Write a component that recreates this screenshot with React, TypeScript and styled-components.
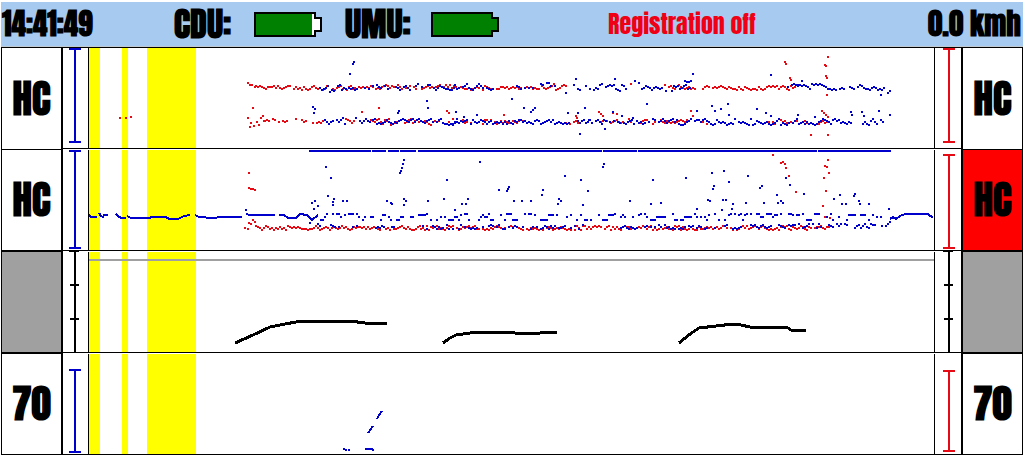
import React from 'react';
import styled, { createGlobalStyle } from 'styled-components';

const BLUE = '#0000cc';
const RED = '#e60a14';
const GREY = '#a0a0a0';

const GlobalStyle = createGlobalStyle`
  * { box-sizing: border-box; }
  body { margin: 0; background: #fff; }
`;

const Screen = styled.main`
  padding: 0 1px;
  color: #000;
  background: #fff;
  font-family: Impact, Anton, 'Roboto Condensed', 'Liberation Sans', sans-serif;
  font-weight: 700;
`;

const StatusBar = styled.header`
  display: flex;
  align-items: center;
  height: 47px;
  padding: 0 2px 0 1px;
  background: #a6caf0;
  border-top: 2px solid #fff;
  border-bottom: 1px solid #c0c8d0;
  white-space: nowrap;
`;

const Clock = styled.time`
  flex: none;
  width: 172px;
  font-size: 29px;
  line-height: 32px;
`;

const Unit = styled.div`
  display: flex;
  align-items: center;
  flex: none;
  width: 171px;
  font-size: 34px;
  line-height: 36px;
`;

const UnitName = styled.span<{ $width: number }>`
  width: ${p => p.$width}px;
`;

const Registration = styled.span`
  margin-left: 92px;
  color: #f00014;
  font-size: 24px;
  font-weight: 400;
  line-height: 28px;
`;

const Speed = styled.span`
  margin-left: auto;
  font-size: 29px;
  line-height: 32px;
`;

const Lanes = styled.div`
  border: 0 solid #000;
  border-width: 0 1px;
`;

const Lane = styled.section`
  display: grid;
  grid-template-columns: 61px 25px minmax(0, 1fr) 26px 61px;
  height: 102px;
  border-bottom: 1px solid #000;
  &:first-child { border-top: 1px solid #000; }
`;

const Channel = styled.div<{ $side: 'left' | 'right'; $fill: string }>`
  display: flex;
  align-items: center;
  justify-content: center;
  background: ${p => p.$fill};
  border: 0 solid #000;
  border-top-width: 1px;
  border-${p => (p.$side === 'left' ? 'right' : 'left')}-width: 2px;
  font-size: 39px;
  line-height: 44px;
  ${Lane}:first-child & { border-top-width: 0; }
`;

const Gauge = styled.svg`
  display: block;
  width: 100%;
  height: 101px;
`;

const Plot = styled.svg`
  display: block;
  width: 100%;
  height: 100px;
  margin-top: 1px;
  border: 0 solid #000;
  border-width: 0 1px;
  ${Lane}:first-child & { margin-top: 0; }
`;

type Pt = [number, number];
/* from, to, centre, spread, share of filled columns */
type Band = [number, number, number, number, number];

const random = (seed: number) => {
  let s = seed;
  return () => {
    s = (s * 1664525 + 1013904223) % 4294967296;
    return s / 4294967296;
  };
};

/* Echo trace that scatters around its centre, broken into short slanted runs */
const drift = (bands: Band[], seed: number): Pt[] => {
  const next = random(seed);
  const out: Pt[] = [];
  bands.forEach(([from, to, centre, spread, fill]) => {
    let y = centre;
    let slope = 1;
    for (let x = from; x < to; x += 2) {
      if (next() < 0.4) slope = -slope;
      y += slope * (next() < 0.4 ? 2 : 1);
      if (Math.abs(y - centre) > spread) y = centre + Math.round((next() - 0.5) * 2 * spread);
      if (next() < fill) out.push([x, y]);
    }
  });
  return out;
};

/* Separate echoes that fall on a few fixed levels */
const levels = (from: number, to: number, ys: number[], fill: number, seed: number): Pt[] => {
  const next = random(seed);
  const out: Pt[] = [];
  let y = ys[0];
  for (let x = from; x < to; x += 2) {
    if (next() < 0.55) y = ys[Math.floor(next() * ys.length)];
    if (next() < fill) out.push([x, y]);
  }
  return out;
};

const pairs = (text: string): Pt[] =>
  text.trim().split(/\s+/).map(p => p.split(',').map(Number) as Pt);

const Dots = ({ points, color }: { points: Pt[]; color: string }) => (
  <path fill={color} d={points.map(([x, y]) => `M${x} ${y}h2v2h-2z`).join('')} />
);

const Line = ({ points, color, width = 2 }: { points: string; color: string; width?: number }) => (
  <polyline points={points} fill="none" stroke={color} strokeWidth={width} />
);

const upperRed = [
  ...drift([
    [255, 320, 87, 2, 0.98], [320, 373, 87, 2, 0.75], [375, 456, 86, 2, 0.8],
    [460, 492, 87, 2, 0.9], [496, 539, 87, 1, 0.95], [541, 566, 86, 3, 0.9],
    [664, 690, 86, 2, 0.8], [690, 796, 87, 2, 0.92],
  ], 11),
  ...drift([
    [264, 287, 121, 3, 0.85], [295, 306, 119, 3, 0.8], [312, 323, 121, 1, 0.8],
    [343, 354, 120, 2, 0.9], [370, 456, 121, 3, 0.75], [456, 523, 121, 2, 0.65],
    [565, 578, 121, 2, 0.7], [600, 632, 120, 2, 0.8], [640, 688, 121, 2, 0.8],
    [700, 712, 121, 2, 0.6], [766, 810, 121, 2, 0.7], [818, 828, 121, 2, 0.6],
  ], 29),
  ...pairs(`247,82 249,84 251,84 254,86 119,117 125,117 130,116 252,107 247,117 249,126
    250,122 253,125 256,121 258,124 260,117 262,115 263,120 378,107 361,111 446,110 448,112
    503,114 575,115 576,117 598,111 600,113 602,115 612,112 616,113 630,83 784,61 785,63
    789,77 790,79 827,56 824,64 825,65 825,75 826,77 826,94 821,110 823,112 825,114 827,116
    810,134 827,134 690,110 692,115`),
];

const upperBlue = [
  ...drift([
    [319, 346, 88, 4, 0.85], [346, 385, 87, 3, 0.6], [387, 456, 86, 3, 0.7],
    [452, 494, 86, 3, 0.8], [510, 535, 86, 3, 0.6], [540, 556, 84, 2, 0.6],
    [573, 603, 86, 3, 0.75], [605, 626, 87, 3, 0.9], [641, 690, 87, 3, 0.85],
    [684, 692, 82, 2, 0.9], [785, 800, 86, 3, 0.8], [797, 885, 86, 3, 0.9],
  ], 37),
  ...drift([
    [324, 345, 121, 4, 0.9], [355, 372, 119, 3, 0.85], [372, 456, 121, 3, 0.92],
    [450, 570, 121, 2, 0.96], [577, 634, 121, 2, 0.9], [636, 852, 121, 3, 0.95],
    [862, 884, 121, 3, 0.9],
  ], 43),
  ...pairs(`353,61 352,63 349,73 312,106 314,108 313,112 426,100 427,107 398,110 397,112
    511,98 523,107 534,107 532,109 530,111 455,111 456,118 463,116 476,114 565,92 575,78
    614,78 567,112 577,112 584,107 579,133 604,128 588,119 646,103 632,117 612,111 621,115
    634,80 638,82 692,73 770,74 711,105 714,110 720,108 696,110 727,103 756,108 765,112
    728,114 770,115 850,111 851,114 861,111 863,115 878,110 889,114 880,94 887,92 889,90
    814,116 797,114 801,80`),
];

const lowerRed = [
  ...drift([
    [255, 420, 227, 2, 0.99], [420, 600, 227, 2, 0.94], [600, 830, 227, 2, 0.94],
  ], 53),
  ...pairs(`244,227 247,228 248,222 250,223 252,219 254,221 248,172 248,187 250,188 252,188
    254,189 772,154 780,162 782,161 784,163 785,167 788,175 795,191 827,159 824,165 826,166
    828,172 823,177 825,190 822,205 824,216 829,217`),
];

const lowerBlue = [
  ...levels(320, 882, [213, 214, 216, 219], 0.6, 61),
  ...drift([
    [330, 340, 225, 2, 0.8], [352, 359, 226, 1, 0.7], [375, 395, 226, 1, 0.6],
    [422, 500, 226, 2, 0.68], [502, 585, 226, 2, 0.65], [620, 745, 226, 2, 0.65],
    [750, 834, 225, 2, 0.7], [836, 850, 224, 2, 0.85], [854, 876, 225, 2, 0.9],
  ], 71),
  ...pairs(`325,166 330,177 327,195 311,202 314,200 317,205 313,208 333,198 332,201 332,204
    342,200 346,200 403,159 402,163 401,167 400,170 399,172 446,179 386,200 390,202 391,203
    403,198 405,200 403,204 427,200 443,198 461,203 245,209 479,161 498,189 506,190 507,188
    508,186 465,203 467,198 513,200 521,200 530,200 541,194 542,189 564,175 558,198 560,200
    557,203 580,179 582,204 587,190 602,166 603,163 629,200 652,179 650,203 660,202 454,209
    685,177 711,172 723,170 728,181 712,188 713,185 747,175 759,187 761,185 707,199 709,200
    722,199 725,199 732,203 745,202 763,202 776,194 777,202 780,200 782,202 785,177 789,184
    803,193 833,198 839,194 841,203 845,203 853,195 854,193 858,200 859,203 868,203 888,208
    731,208 721,209 696,208 881,225 885,225 887,223 889,221 309,222 317,223 319,225`),
];

const Shade = ({ top }: { top: number }) => (
  <g fill="#ff0">
    <rect x="89" y={top} width="11" height="100" />
    <rect x="122" y={top} width="6" height="100" />
    <rect x="147" y={top} width="49" height="100" />
  </g>
);

const Trace = ({ top, label, children }: { top: number; label: string; children?: React.ReactNode }) => (
  <Plot
    viewBox={`89 ${top} 845 100`}
    preserveAspectRatio="none"
    shapeRendering="crispEdges"
    role="img"
    aria-label={label}
  >
    <Shade top={top} />
    {children}
  </Plot>
);

/* Gate bar between two heights of a lane */
const Gate = ({ from, to, color, x = 11 }: { from: number; to: number; color: string; x?: number }) => (
  <Gauge viewBox="0 0 25 101" preserveAspectRatio="xMinYMin" shapeRendering="crispEdges" aria-hidden="true">
    <path
      fill={color}
      d={`M${x} ${from}h2V${to}h-2zM${x - 5} ${from}h12v2h-12zM${x - 5} ${to - 2}h12v2h-12z`}
    />
  </Gauge>
);

const Scale = ({ x = 11 }: { x?: number }) => (
  <Gauge viewBox="0 0 25 101" preserveAspectRatio="xMinYMin" shapeRendering="crispEdges" aria-hidden="true">
    <path d={`M${x} 0h2v101h-2zM${x - 5} 0h10v1h-10zM${x - 4} 33h9v2h-9zM${x - 4} 67h9v2h-9z`} />
  </Gauge>
);

const Battery = ({ level, label }: { level: number; label: string }) => (
  <svg width="68" height="25" viewBox="0 0 68 25" role="img" aria-label={label} shapeRendering="crispEdges">
    <path d="M1 1H61V6H67V19H61V24H1Z" fill="#fff" />
    {level < 100 ? (
      <path d="M2 2H58V23H2Z" fill="#008000" />
    ) : (
      <path d="M1 1H61V6H67V19H61V24H1Z" fill="#008000" />
    )}
    <path d="M1 1H61V6H67V19H61V24H1Z" fill="none" stroke="#000" strokeWidth="2" />
  </svg>
);

export default function App() {
  return (
    <Screen>
      <GlobalStyle />
      <StatusBar>
        <Clock>14:41:49</Clock>
        <Unit>
          <UnitName $width={80}>CDU:</UnitName>
          <Battery level={93} label="CDU battery" />
        </Unit>
        <Unit>
          <UnitName $width={86}>UMU:</UnitName>
          <Battery level={100} label="UMU battery" />
        </Unit>
        <Registration>Registration off</Registration>
        <Speed>0.0 kmh</Speed>
      </StatusBar>
      <Lanes>
        <Lane>
          <Channel $side="left" $fill="#fff">HC</Channel>
          <Gate from={0} to={95} color={BLUE} />
          <Trace top={48} label="Upper echo trace">
            <Dots points={upperRed} color={RED} />
            <Dots points={upperBlue} color={BLUE} />
          </Trace>
          <Gate from={0} to={95} color={RED} x={13} />
          <Channel $side="right" $fill="#fff">HC</Channel>
        </Lane>
        <Lane>
          <Channel $side="left" $fill="#fff">HC</Channel>
          <Gate from={1} to={100} color={BLUE} />
          <Trace top={150} label="Lower echo trace">
            <path
              fill={BLUE}
              d="M309 150H371v2H309zM372 150H386v2H372zM388 150H399v2H388zM400 150H416v2H400zM418 150H602v2H418zM603 150H637v2H603zM638 150H817v2H638zM818 150H891v2H818z"
            />
            <Line color={BLUE} points="89,215 91,217 97,217" />
            <Line color={BLUE} points="99,213 101,216 103,217 104,215 108,215" />
            <Line color={BLUE} points="116,214 118,216 121,218 126,218" />
            <Line color={BLUE} points="127,216 131,218 146,218 155,217 166,217 169,219 178,219 184,216 190,215" />
            <Line color={BLUE} points="195,215 199,217 213,218 222,217 242,217" />
            <Line color={BLUE} points="246,214 250,215 275,215" />
            <Line color={BLUE} points="279,215 284,215 288,218 296,218 300,214 307,215 312,220 318,215" />
            <Line color={BLUE} points="890,219 893,217 896,219 900,216 905,214 928,214 930,216 933,217" />
            <Dots points={lowerRed} color={RED} />
            <Dots points={lowerBlue} color={BLUE} />
          </Trace>
          <Gate from={5} to={100} color={RED} x={13} />
          <Channel $side="right" $fill="#f00">HC</Channel>
        </Lane>
        <Lane>
          <Channel $side="left" $fill={GREY} />
          <Scale />
          <Trace top={252} label="Contact level">
            <rect x="89" y="259" width="845" height="2" fill={GREY} />
            <Line color="#000" width={3} points="235,343 253,335 270,327 285,324 302,321 350,321 365,323 387,324" />
            <Line color="#000" width={3} points="443,343 450,338 456,335 470,333 495,332 515,333 540,333 557,332" />
            <Line color="#000" width={3} points="679,343 690,334 699,328 716,326 733,324 741,325 750,327 765,327 775,327 788,328 791,330 799,330 806,331" />
          </Trace>
          <Scale x={13} />
          <Channel $side="right" $fill={GREY} />
        </Lane>
        <Lane>
          <Channel $side="left" $fill="#fff">70</Channel>
          <Gate from={16} to={100} color={BLUE} />
          <Trace top={354} label="70 degree echo trace">
            <Line color={BLUE} points="368,433 373,426" />
            <Line color={BLUE} points="377,419 379,415 382,411" />
            <Dots color={BLUE} points={pairs('343,448 345,449 348,449 365,448 367,448 369,448 371,448 372,449')} />
          </Trace>
          <Gate from={17} to={99} color={RED} x={13} />
          <Channel $side="right" $fill="#fff">70</Channel>
        </Lane>
      </Lanes>
    </Screen>
  );
}
